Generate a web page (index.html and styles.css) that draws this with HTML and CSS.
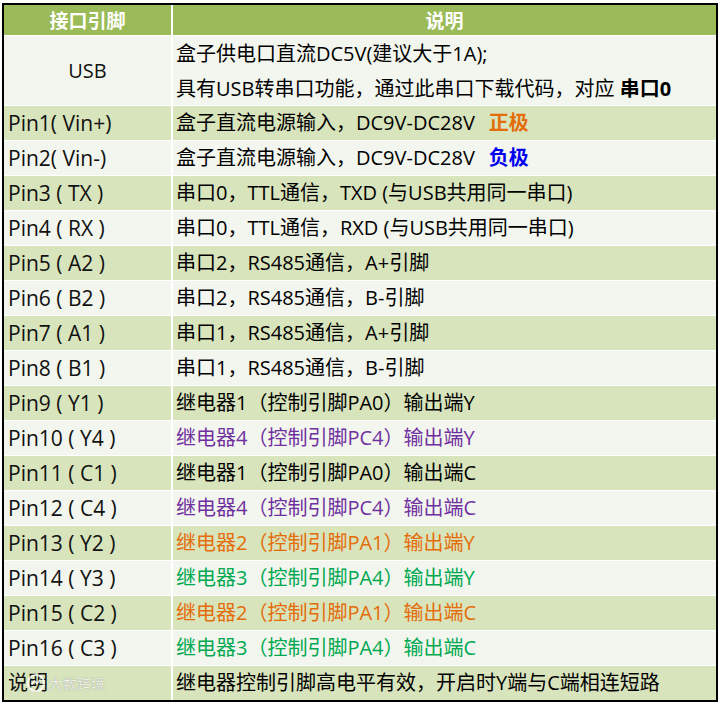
FILE: index.html
```html
<!DOCTYPE html>
<html lang="zh-CN">
<head>
<meta charset="utf-8">
<title>接口引脚说明</title>
<link rel="stylesheet" href="styles.css">
</head>
<body>
<div class="sheet">
  <div class="grid">
    <div class="cell head">接口引脚</div>
    <div class="cell head">说明</div>

    <div class="cell light center">USB</div>
    <div class="cell light multi">
      <div>盒子供电口直流DC5V(建议大于1A);</div>
      <div>具有USB转串口功能，通过此串口下载代码，对应 <b>串口0</b></div>
    </div>

    <div class="cell green">Pin1( Vin+)</div>
    <div class="cell green">盒子直流电源输入，DC9V-DC28V <b class="orange tag">正极</b></div>

    <div class="cell light">Pin2( Vin-)</div>
    <div class="cell light">盒子直流电源输入，DC9V-DC28V <b class="blue tag">负极</b></div>

    <div class="cell green">Pin3 ( TX )</div>
    <div class="cell green">串口0，TTL通信，TXD (与USB共用同一串口)</div>

    <div class="cell light">Pin4 ( RX )</div>
    <div class="cell light">串口0，TTL通信，RXD (与USB共用同一串口)</div>

    <div class="cell green">Pin5 ( A2 )</div>
    <div class="cell green">串口2，RS485通信，A+引脚</div>

    <div class="cell light">Pin6 ( B2 )</div>
    <div class="cell light">串口2，RS485通信，B-引脚</div>

    <div class="cell green">Pin7 ( A1 )</div>
    <div class="cell green">串口1，RS485通信，A+引脚</div>

    <div class="cell light">Pin8 ( B1 )</div>
    <div class="cell light">串口1，RS485通信，B-引脚</div>

    <div class="cell green">Pin9 ( Y1 )</div>
    <div class="cell green">继电器1（控制引脚PA0）输出端Y</div>

    <div class="cell light">Pin10 ( Y4 )</div>
    <div class="cell light purple">继电器4（控制引脚PC4）输出端Y</div>

    <div class="cell green">Pin11 ( C1 )</div>
    <div class="cell green">继电器1（控制引脚PA0）输出端C</div>

    <div class="cell light">Pin12 ( C4 )</div>
    <div class="cell light purple">继电器4（控制引脚PC4）输出端C</div>

    <div class="cell green">Pin13 ( Y2 )</div>
    <div class="cell green orange">继电器2（控制引脚PA1）输出端Y</div>

    <div class="cell light">Pin14 ( Y3 )</div>
    <div class="cell light teal">继电器3（控制引脚PA4）输出端Y</div>

    <div class="cell green">Pin15 ( C2 )</div>
    <div class="cell green orange">继电器2（控制引脚PA1）输出端C</div>

    <div class="cell light">Pin16 ( C3 )</div>
    <div class="cell light teal">继电器3（控制引脚PA4）输出端C</div>

    <div class="cell green note">说明
      <span class="watermark">
        <svg class="wm-logo" width="20" height="20" viewBox="0 0 20 20"><circle cx="10" cy="10" r="8" fill="none" stroke="rgba(255,255,255,0.8)" stroke-width="2.2"/><path d="M5.5 11.5 L8.5 8 L11 10.5 L14.5 6.5" fill="none" stroke="rgba(255,255,255,0.8)" stroke-width="1.8"/></svg>
        <span class="wm-text">大数跨境</span>
      </span>
    </div>
    <div class="cell green">继电器控制引脚高电平有效，开启时Y端与C端相连短路</div>
  </div>
</div>
</body>
</html>
```

FILE: styles.css
```css
html, body {
  margin: 0;
  padding: 0;
  background: #ffffff;
}

.sheet {
  margin: 3px 0 0 2px;
  width: 712px;
  border: 2px solid #000000;
  background: #ffffff;
}

.grid {
  display: grid;
  grid-template-columns: 167px 543px;
  grid-template-rows: 30px 69px repeat(17, 34px);
  column-gap: 2px;
  row-gap: 1px;
  font-family: "Open Sans", "Noto Sans CJK SC", sans-serif;
  font-size: 20px;
  color: #000000;
}

.cell {
  display: flex;
  align-items: center;
  padding: 0 0 0 3px;
  white-space: nowrap;
  line-height: 34px;
  position: relative;
}

.grid > .cell:nth-child(odd) {
  padding-left: 4px;
  font-size: 21px;
  color: #111111;
}

.head {
  background: #9bbb59;
  color: #ffffff;
  font-weight: 700;
  justify-content: center;
  font-family: "Noto Sans CJK SC", sans-serif;
  font-size: 19px;
  padding: 0;
}

.grid > .head:nth-child(odd) {
  padding-left: 0;
  font-size: 19px;
  color: #ffffff;
}

.light {
  background: #f3f6ee;
}

.green {
  background: #d8e4bc;
}

.center {
  justify-content: center;
}

.grid > .center:nth-child(odd) {
  padding-left: 0;
  font-size: 20px;
}

.grid > .note:nth-child(odd) {
  font-size: 20px;
}

.multi {
  flex-direction: column;
  align-items: flex-start;
  justify-content: center;
  line-height: 35px;
}

b {
  font-weight: 700;
}

.tag {
  margin-left: 14px;
}

.orange {
  color: #e46c0a;
}

.blue {
  color: #0000ee;
}

.purple {
  color: #7030a0;
}

.teal {
  color: #00a850;
}

.watermark {
  position: absolute;
  left: 22px;
  top: 7px;
  display: flex;
  align-items: center;
  gap: 3px;
  line-height: 20px;
}

.wm-logo {
  display: block;
}

.wm-text {
  font-family: "Noto Sans CJK SC", sans-serif;
  font-size: 14px;
  color: rgba(255, 255, 255, 0.85);
  text-shadow: 0 0 1px rgba(0, 0, 0, 0.4);
}
```
